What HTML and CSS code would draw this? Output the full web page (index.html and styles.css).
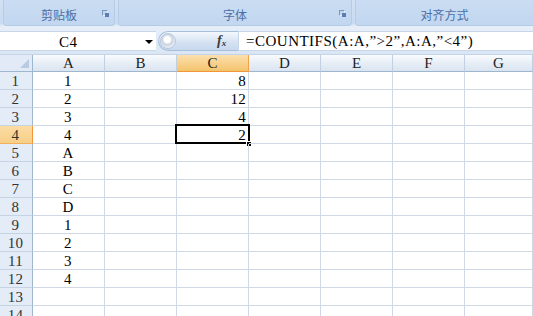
FILE: index.html
```html
<!DOCTYPE html>
<html lang="zh-CN">
<head>
<meta charset="utf-8">
<title>Excel COUNTIFS</title>
<link rel="stylesheet" href="styles.css">
</head>
<body>
<div class="app">
  <div class="ribbon">
    <div class="group g1"><span class="label">剪贴板</span><span class="launcher"></span></div>
    <div class="group g2"><span class="label">字体</span><span class="launcher"></span></div>
    <div class="group g3"><span class="label">对齐方式</span></div>
  </div>
  <div class="fbar">
    <div class="namebox"><span class="name">C4</span><span class="arrow"></span></div>
    <div class="fxbtn"><span class="knob"></span><span class="fx">f<sub>x</sub></span></div>
    <div class="formula">=COUNTIFS(A:A,”&gt;2”,A:A,”&lt;4”)</div>
  </div>
  <div class="sheet">
    <div class="corner"></div>
    <div class="ch">A</div><div class="ch">B</div><div class="ch sel">C</div><div class="ch">D</div><div class="ch">E</div><div class="ch">F</div><div class="ch">G</div>

    <div class="rh">1</div><div class="c ctr">1</div><div class="c"></div><div class="c num">8</div><div class="c"></div><div class="c"></div><div class="c"></div><div class="c"></div>
    <div class="rh">2</div><div class="c ctr">2</div><div class="c"></div><div class="c num">12</div><div class="c"></div><div class="c"></div><div class="c"></div><div class="c"></div>
    <div class="rh">3</div><div class="c ctr">3</div><div class="c"></div><div class="c num">4</div><div class="c"></div><div class="c"></div><div class="c"></div><div class="c"></div>
    <div class="rh sel">4</div><div class="c ctr">4</div><div class="c"></div><div class="c num active">2<span class="cursor"></span><span class="handle"></span></div><div class="c"></div><div class="c"></div><div class="c"></div><div class="c"></div>
    <div class="rh">5</div><div class="c ctr">A</div><div class="c"></div><div class="c"></div><div class="c"></div><div class="c"></div><div class="c"></div><div class="c"></div>
    <div class="rh">6</div><div class="c ctr">B</div><div class="c"></div><div class="c"></div><div class="c"></div><div class="c"></div><div class="c"></div><div class="c"></div>
    <div class="rh">7</div><div class="c ctr">C</div><div class="c"></div><div class="c"></div><div class="c"></div><div class="c"></div><div class="c"></div><div class="c"></div>
    <div class="rh">8</div><div class="c ctr">D</div><div class="c"></div><div class="c"></div><div class="c"></div><div class="c"></div><div class="c"></div><div class="c"></div>
    <div class="rh">9</div><div class="c ctr">1</div><div class="c"></div><div class="c"></div><div class="c"></div><div class="c"></div><div class="c"></div><div class="c"></div>
    <div class="rh">10</div><div class="c ctr">2</div><div class="c"></div><div class="c"></div><div class="c"></div><div class="c"></div><div class="c"></div><div class="c"></div>
    <div class="rh">11</div><div class="c ctr">3</div><div class="c"></div><div class="c"></div><div class="c"></div><div class="c"></div><div class="c"></div><div class="c"></div>
    <div class="rh">12</div><div class="c ctr">4</div><div class="c"></div><div class="c"></div><div class="c"></div><div class="c"></div><div class="c"></div><div class="c"></div>
    <div class="rh">13</div><div class="c"></div><div class="c"></div><div class="c"></div><div class="c"></div><div class="c"></div><div class="c"></div><div class="c"></div>
    <div class="rh">14</div><div class="c"></div><div class="c"></div><div class="c"></div><div class="c"></div><div class="c"></div><div class="c"></div><div class="c"></div>
  </div>
</div>
</body>
</html>
```

FILE: styles.css
```css
* { box-sizing: border-box; }
html, body { margin: 0; padding: 0; }
body {
  width: 533px;
  height: 316px;
  overflow: hidden;
  background: #ffffff;
  font-family: "Liberation Serif", "Noto Sans CJK SC", serif;
}
.app { width: 533px; height: 316px; overflow: hidden; }

/* ribbon */
.ribbon {
  height: 28px;
  display: flex;
  background: linear-gradient(#d3e1f3, #c7daf1 85%, #e9f0f9);
  border-bottom: 1px solid #e6eef8;
}
.group {
  position: relative;
  height: 26px;
  display: flex;
  align-items: center;
  justify-content: center;
  border: 1px solid #b6cbe4;
  border-top: none;
  border-radius: 0 0 4px 4px;
  background: linear-gradient(#c9dcf2, #c2d7f0);
  font-family: "Noto Sans CJK SC", sans-serif;
  font-size: 12px;
  color: #4a6fa8;
  padding-top: 3px;
}
.g1 { width: 112px; margin-left: 3px; }
.g2 { width: 234px; margin-left: 3px; }
.g3 { flex: 1; margin-left: 3px; border-right: none; border-radius: 0 0 0 4px; }
.launcher {
  position: absolute;
  right: 6px;
  top: 10px;
  width: 6px;
  height: 6px;
  border: 1px solid #7a97c2;
  border-right-color: #e9f0fa;
  border-bottom-color: #e9f0fa;
  background: #c2d6ee;
}
.launcher::after {
  content: "";
  position: absolute;
  right: -2px;
  bottom: -2px;
  width: 4px;
  height: 4px;
  background: #5a7db3;
}

/* formula bar */
.fbar {
  height: 27px;
  display: flex;
  align-items: flex-start;
  background: linear-gradient(#e5eef9, #dbe6f4);
  padding-top: 3px;
  border-bottom: 1px solid #c5d4e8;
}
.namebox {
  width: 156px;
  height: 20px;
  background: #fff;
  position: relative;
  border-top: 1px solid #c8d6e8;
  border-bottom: 1px solid #c8d6e8;
}
.name {
  position: absolute;
  left: 59px;
  top: 1px;
  font-size: 15px;
  letter-spacing: 0.5px;
  line-height: 18px;
  color: #000;
}
.arrow {
  position: absolute;
  left: 145px;
  top: 8px;
  width: 0; height: 0;
  border-left: 4px solid transparent;
  border-right: 4px solid transparent;
  border-top: 4px solid #000;
}
.fxbtn {
  width: 80px;
  height: 20px;
  position: relative;
  border-radius: 10px 0 0 10px;
  background: linear-gradient(#f4f8fd, #d4e1f2 60%, #c8d9ef);
  border: 1px solid #a8bfdc;
  border-right: none;
  margin-left: 2px;
}
.knob {
  position: absolute;
  left: 1px;
  top: 1px;
  width: 16px;
  height: 16px;
  border-radius: 50%;
  background: radial-gradient(circle at 45% 40%, #ffffff 0 3px, #c9d3df 5px, #e8eef6 8px);
  border: 1px solid #b8c8dc;
}
.fx {
  position: absolute;
  left: 58px;
  top: 0px;
  font-family: "Liberation Serif", serif;
  font-style: italic;
  font-weight: bold;
  font-size: 14px;
  line-height: 18px;
  color: #3b3b3b;
}
.fx sub { font-size: 9px; vertical-align: -1px; }
.formula {
  flex: 1;
  height: 20px;
  background: #fff;
  border: 1px solid #c8d6e8;
  border-right: none;
  padding-left: 7px;
  font-size: 15px;
  letter-spacing: 0.5px;
  line-height: 18px;
  color: #000;
  white-space: nowrap;
}

/* sheet */
.sheet {
  display: grid;
  grid-template-columns: 33px repeat(6, 72px) 68px;
  grid-template-rows: 17px repeat(14, 18px);
  font-size: 15px;
  color: #000;
}
.corner {
  background: #e1eaf6;
  border-right: 1px solid #9eb6ce;
  border-bottom: 1px solid #9eb6ce;
  position: relative;
}
.corner::after {
  content: "";
  position: absolute;
  right: 3px;
  bottom: 3px;
  width: 0; height: 0;
  border-left: 9px solid transparent;
  border-bottom: 9px solid #b9cbe1;
}
.ch {
  background: linear-gradient(#f9fbfd, #e6edf6 55%, #dae4f0);
  border-right: 1px solid #c0cfe2;
  border-bottom: 1px solid #9eb6ce;
  text-align: center;
  line-height: 17px;
  color: #222;
}
.ch.sel {
  background: linear-gradient(#fbe0ac, #f8d08a 55%, #f3c46c);
  border-right-color: #f2a24a;
  border-bottom-color: #f29536;
}
.rh {
  background: #e4ecf7;
  border-right: 1px solid #9eb6ce;
  border-bottom: 1px solid #c5d3e3;
  text-align: center;
  line-height: 18px;
  color: #333;
  letter-spacing: 0.3px;
  padding-right: 1px;
}
.rh.sel {
  background: linear-gradient(#fbdca3, #f7cf88);
  border-right-color: #f29536;
  border-bottom-color: #f2b05e;
}
.c {
  border-right: 1px solid #d0d7e5;
  border-bottom: 1px solid #d0d7e5;
  line-height: 18px;
  white-space: nowrap;
  position: relative;
  letter-spacing: 0.3px;
}
.ctr { text-align: center; padding-right: 1px; }
.num { text-align: right; padding-right: 2px; }
.cursor {
  position: absolute;
  left: -2px;
  top: -2px;
  right: -2px;
  bottom: -1px;
  border: 2px solid #000;
}
.handle {
  position: absolute;
  right: -4px;
  bottom: -4px;
  width: 6px;
  height: 6px;
  background: #000;
  border: 1px solid #fff;
}
```
